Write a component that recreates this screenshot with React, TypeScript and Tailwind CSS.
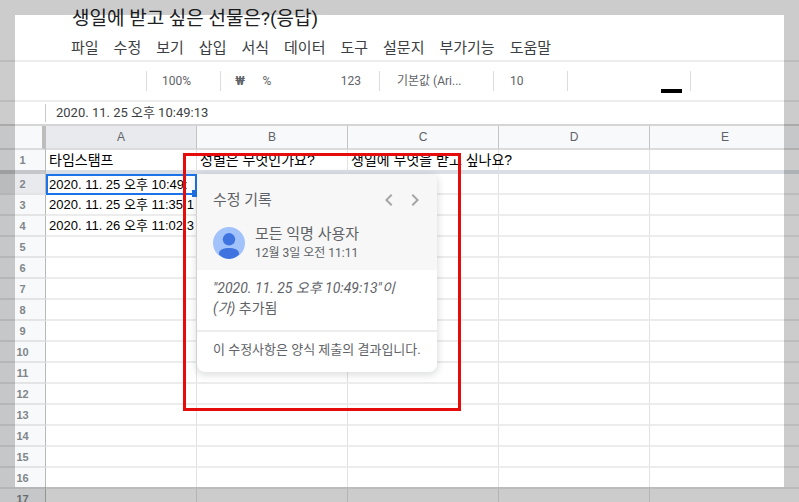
import React, { useState } from 'react';
import clsx from 'clsx';

interface SheetRow {
  id: number;
  cells: string[];
}

const MENUS = ['파일', '수정', '보기', '삽입', '서식', '데이터', '도구', '설문지', '부가기능', '도움말'];
const COLUMNS = ['A', 'B', 'C', 'D', 'E'];

const HEADINGS = ['타임스탬프', '성별은 무엇인가요?', '생일에 무엇을 받고 싶나요?', '', ''];

const ENTRIES: Record<number, string> = {
  2: '2020. 11. 25 오후 10:49:',
  3: '2020. 11. 25 오후 11:35:1',
  4: '2020. 11. 26 오후 11:02:3',
};

const ROWS: SheetRow[] = Array.from({ length: 16 }, (_, i) => ({
  id: i + 2,
  cells: [ENTRIES[i + 2] ?? '', '', '', '', ''],
}));

const Separator: React.FC = () => <div className="h-5 w-px shrink-0 bg-[#dadce0]" />;

const Header: React.FC = () => (
  <header className="border-b-2 border-[#ececec] pt-[7px] pb-px">
    <h1 className="pl-[72px] text-[19px] leading-6 text-[#202124]">생일에 받고 싶은 선물은?(응답)</h1>
    <nav className="flex gap-[15px] pt-1.5 pl-[71px]">
      {MENUS.map(menu => (
        <button key={menu} type="button" className="text-[15px] leading-[22px] whitespace-nowrap text-[#3c4043]">
          {menu}
        </button>
      ))}
    </nav>
  </header>
);

const Toolbar: React.FC = () => (
  <div className="flex h-10 items-center border-b-2 border-[#ececec] pl-[146px] text-xs text-[#5f6368]">
    <Separator />
    <select aria-label="확대/축소" className="w-[73px] appearance-none pl-[15px]">
      <option>100%</option>
    </select>
    <Separator />
    <div className="flex w-[158px] items-center pl-3">
      <button type="button" className="w-3.5 font-bold">₩</button>
      <button type="button" className="ml-3 w-4">%</button>
      <button type="button" className="mr-[18px] ml-auto">123</button>
    </div>
    <Separator />
    <select aria-label="글꼴" className="w-[113px] appearance-none pl-[17px]">
      <option>기본값 (Ari...</option>
    </select>
    <Separator />
    <select aria-label="글꼴 크기" className="w-[73px] appearance-none pl-4">
      <option>10</option>
    </select>
    <Separator />
    <div className="flex h-full w-[122px] items-end justify-end pr-2 pb-[7px]">
      <button type="button" aria-label="텍스트 색상" className="flex h-6 w-[21px] items-end">
        <span className="h-1 w-full bg-black" />
      </button>
    </div>
    <Separator />
  </div>
);

const FormulaBar: React.FC<{ value: string; onChange: (value: string) => void }> = ({ value, onChange }) => (
  <div className="flex h-6 items-center border-b-2 border-[#d5d5d5] pl-[45px]">
    <div className="h-[18px] w-px bg-[#c8c8c8]" />
    <input
      type="text"
      aria-label="수식 입력줄"
      value={value}
      onChange={e => onChange(e.target.value)}
      className="min-w-0 flex-1 pl-2.5 text-[13px] text-[#3c4043] outline-none"
    />
  </div>
);

const Avatar: React.FC = () => (
  <svg viewBox="0 0 32 32" className="h-8 w-8 shrink-0" aria-hidden="true">
    <circle cx="16" cy="16" r="16" fill="#a1c2fa" />
    <circle cx="16" cy="12.3" r="6.2" fill="#3f74e0" />
    <path d="M6 27.6v-1.2c0-3.6 5-5.4 10-5.4s10 1.8 10 5.4v1.2C23.4 30.3 19.9 32 16 32S8.6 30.3 6 27.6z" fill="#3f74e0" />
  </svg>
);

const Chevron: React.FC<{ d: string }> = ({ d }) => (
  <svg viewBox="0 0 24 24" className="h-6 w-6" fill="#a6a6a6" aria-hidden="true">
    <path d={d} />
  </svg>
);

const EditHistory: React.FC = () => (
  <section className="absolute top-12 left-[197px] w-60 overflow-hidden rounded-lg bg-white text-[#5f6368] shadow-[0_2px_6px_2px_rgba(60,64,67,0.15)]">
    <div className="bg-[#f7f7f7] px-4 pt-3.5 pb-2">
      <div className="flex h-6 items-center">
        <h2 className="flex-1 text-[15px]">수정 기록</h2>
        <div className="-mr-1.5 flex gap-0.5">
          <button type="button" aria-label="이전 수정" className="h-6 w-6">
            <Chevron d="M15.41 7.41L14 6l-6 6 6 6 1.41-1.41L10.83 12z" />
          </button>
          <button type="button" aria-label="다음 수정" className="h-6 w-6">
            <Chevron d="M10 6L8.59 7.41 13.17 12l-4.58 4.59L10 18l6-6z" />
          </button>
        </div>
      </div>
      <div className="mt-3 flex items-center gap-2.5">
        <Avatar />
        <div>
          <p className="text-[15px] leading-5">모든 익명 사용자</p>
          <p className="text-xs leading-[18px]">12월 3일 오전 11:11</p>
        </div>
      </div>
    </div>
    <p className="pt-2 pr-8 pb-3 pl-4 text-sm leading-5">
      <em>
        "2020. 11. 25 오후 10:49:13"이
        <wbr />
        (가)
      </em>{' '}
      추가됨
    </p>
    <p className="border-t-2 border-[#ececec] px-4 pt-2 pb-3 text-[13px] leading-5 whitespace-nowrap">
      이 수정사항은 양식 제출의 결과입니다.
    </p>
  </section>
);

const Sheet: React.FC = () => (
  <div className="relative">
    <table className="w-full table-fixed border-separate border-spacing-0 font-['Liberation_Sans','Noto_Sans_CJK_KR',sans-serif]">
      <thead className="text-xs text-[#5f6368]">
        <tr className="h-6">
          <th className="w-[46px] border-r-4 border-b-2 border-r-[#bdbdbd] border-b-[#dcdcdc] bg-[#f8f9fa] p-0" />
          {COLUMNS.map(col => (
            <th
              key={col}
              scope="col"
              className={clsx(
                'w-[151px] border-r border-b-2 border-r-[#c4c4c4] border-b-[#dcdcdc] p-0 font-normal',
                col === 'A' ? 'bg-[#e8eaed]' : 'bg-[#f8f9fa]',
              )}
            >
              {col}
            </th>
          ))}
        </tr>
      </thead>
      <tbody className="text-black">
        <tr className="h-6">
          <th scope="row" className="border-r border-b-4 border-r-[#b8b8b8] border-b-[#c4c6c9] bg-[#f8f9fa] p-0 text-[11px] leading-4 font-bold text-[#80868b]">
            1
          </th>
          {HEADINGS.map((heading, i) => (
            <td
              key={i}
              className="border-r border-b-4 border-r-[#e2e2e2] border-b-[#dadfe5] p-0 pl-[3px] text-sm leading-5 whitespace-nowrap"
            >
              {heading}
            </td>
          ))}
        </tr>
        {ROWS.map(row => (
          <tr key={row.id} className="h-[21px]">
            <th
              scope="row"
              className={clsx(
                'border-r border-b-2 border-r-[#b8b8b8] border-b-[#e4e4e4] p-0 text-[11px] leading-4 font-bold text-[#80868b]',
                row.id === 2 ? 'bg-[#e8eaed]' : 'bg-[#f8f9fa]',
              )}
            >
              {row.id}
            </th>
            {row.cells.map((cell, i) => {
              const selected = row.id === 2 && i === 0;
              return (
                <td
                  key={i}
                  className={clsx(
                    'p-0 text-[13px] leading-[17px] whitespace-nowrap',
                    selected
                      ? 'relative border-2 border-[#1a73e8] pl-px'
                      : 'border-r border-b-2 border-r-[#e2e2e2] border-b-[#ececec] pl-[3px]',
                  )}
                >
                  {cell}
                  {selected && <span className="absolute -right-1 -bottom-1 h-[7px] w-[7px] bg-[#1a73e8]" />}
                </td>
              );
            })}
          </tr>
        ))}
      </tbody>
    </table>
    <EditHistory />
    <div className="pointer-events-none absolute top-[27px] left-[183px] h-[258px] w-[278px] border-3 border-[#e60c0c]" />
  </div>
);

const App: React.FC = () => {
  const [formula, setFormula] = useState('2020. 11. 25 오후 10:49:13');

  return (
    <div className="relative h-screen overflow-hidden bg-white font-[Roboto,'Noto_Sans_CJK_KR',sans-serif]">
      <Header />
      <Toolbar />
      <FormulaBar value={formula} onChange={setFormula} />
      <Sheet />
      {/* Translucent frame around the whole window */}
      <div className="pointer-events-none absolute inset-0 border-15 border-black/20" />
    </div>
  );
};

export default App;
